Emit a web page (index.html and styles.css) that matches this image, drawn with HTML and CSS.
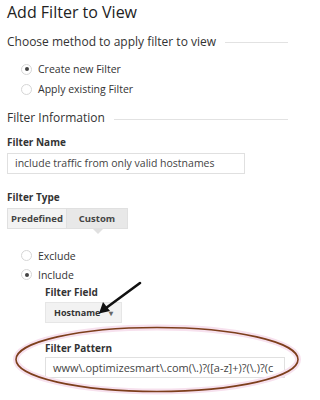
FILE: index.html
```html
<!DOCTYPE html>
<html>
<head>
<meta charset="utf-8">
<link rel="stylesheet" href="styles.css">
</head>
<body>
<div class="page">
  <div class="title">Add Filter to View</div>
  <div class="section-head first"><span>Choose method to apply filter to view</span><i class="rule"></i></div>
  <div class="radios top">
    <div class="radio on"><span class="dot"></span><span>Create new Filter</span></div>
    <div class="radio"><span class="dot"></span><span>Apply existing Filter</span></div>
  </div>
  <div class="section-head info"><span>Filter Information</span><i class="rule"></i></div>
  <div class="label name-label">Filter Name</div>
  <div class="input name-input">include traffic from only valid hostnames</div>
  <div class="label type-label">Filter Type</div>
  <div class="tabs">
    <div class="tab">Predefined</div>
    <div class="tab active">Custom</div>
  </div>
  <div class="radios bottom">
    <div class="radio"><span class="dot"></span><span>Exclude</span></div>
    <div class="radio on"><span class="dot"></span><span>Include</span></div>
  </div>
  <div class="indent">
    <div class="label field-label">Filter Field</div>
    <div class="select">Hostname <span class="caret">&#9662;</span></div>
    <div class="label pattern-label">Filter Pattern</div>
    <div class="input pattern-input">www\.optimizesmart\.com(\.)?([a-z]+)?(\.)?(c</div>
  </div>
  <svg class="annot" width="308" height="400" viewBox="0 0 308 400">
    <ellipse cx="157" cy="359.5" rx="141" ry="32" fill="none" stroke="#f7e1ee" stroke-width="6"/>
    <ellipse cx="157" cy="359.5" rx="141" ry="32" fill="none" stroke="#7d3f1c" stroke-width="1.6"/>
    <line x1="140" y1="283" x2="106" y2="308" stroke="#111" stroke-width="2.6" stroke-linecap="round"/>
    <polygon points="99,313.5 103,302 110,311" fill="#111"/>
  </svg>
</div>
</body>
</html>
```
FILE: styles.css
```css
html, body { margin: 0; padding: 0; background: #fff; }
.page {
  position: relative;
  width: 308px;
  height: 400px;
  overflow: hidden;
  box-sizing: border-box;
  padding: 0 20px 0 7px;
  font-family: "Open Sans", "Liberation Sans", sans-serif;
  color: #333;
}
.title {
  font-size: 16px;
  line-height: 25px;
  color: #222;
}
.section-head {
  display: flex;
  align-items: center;
  gap: 9px;
  font-size: 12px;
  line-height: 25px;
  height: 25px;
  color: #333;
}
.section-head.first { margin-top: 4px; }
.section-head.info { margin-top: 9px; height: 20px; line-height: 20px; }
.rule { flex: 1; height: 1px; background: #e2e2e2; margin-top: 2px; }
.radios { display: flex; flex-direction: column; padding-left: 14px; }
.radios.top { margin-top: 5px; }
.radios.top .radio { height: 20px; }
.radios.bottom { margin-top: 17px; }
.radios.bottom .radio { height: 19px; }
.radio {
  display: flex;
  align-items: center;
  gap: 6px;
  font-size: 10.5px;
  color: #333;
}
.dot {
  width: 11px;
  height: 11px;
  border: 1px solid #d6d6d6;
  border-radius: 50%;
  box-sizing: border-box;
  display: flex;
  align-items: center;
  justify-content: center;
  background: #fff;
}
.radio.on .dot::after {
  content: "";
  width: 4px;
  height: 4px;
  border-radius: 50%;
  background: #444;
}
.label {
  font-size: 10px;
  font-weight: 700;
  color: #333;
  line-height: 18px;
}
.name-label { margin-top: 5px; }
.type-label { margin-top: 14px; }
.input {
  box-sizing: border-box;
  height: 21px;
  border: 1px solid #e0e0e0;
  background: #fff;
  font-size: 10.5px;
  line-height: 19px;
  padding: 0 7px;
  white-space: nowrap;
  overflow: hidden;
  color: #444;
}
.name-input { margin-top: 2px; width: 238px; }
.tabs { display: flex; margin-top: 2px; }
.tab {
  position: relative;
  box-sizing: border-box;
  height: 21px;
  width: 60px;
  border: 1px solid #e0e0e0;
  background: #f3f3f3;
  font-size: 9.5px;
  font-weight: 700;
  line-height: 19px;
  text-align: center;
  color: #444;
}
.tab.active { width: 61px; background: #e8e8e8; border-left: none; }
.tab.active::after {
  content: "";
  position: absolute;
  left: 26px;
  top: 20px;
  border-left: 5px solid transparent;
  border-right: 5px solid transparent;
  border-top: 5px solid #e0e0e0;
}
.indent { padding-left: 38px; }
.field-label { line-height: 16px; }
.select {
  margin-top: 2px;
  box-sizing: border-box;
  width: 77px;
  height: 21px;
  border: 1px solid #e6e6e6;
  background: #f2f2f2;
  font-size: 9px;
  font-weight: 700;
  line-height: 19px;
  padding-left: 8px;
  color: #333;
}
.caret { font-size: 8px; color: #666; margin-left: 6px; }
.pattern-label { margin-top: 17px; line-height: 16px; }
.pattern-input { margin-top: 1px; width: 240px; font-size: 11px; padding-left: 7px; }
.annot { position: absolute; left: 0; top: 0; pointer-events: none; }
```
